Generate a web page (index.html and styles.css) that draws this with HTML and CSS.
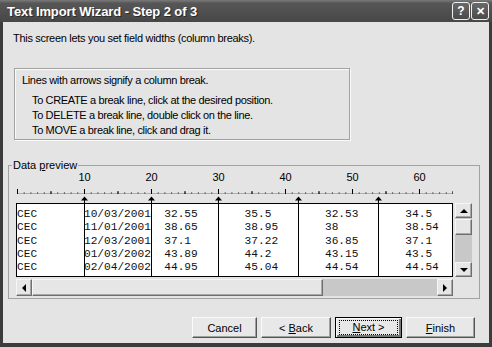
FILE: index.html
```html
<!DOCTYPE html>
<html lang="en">

<head>
    <meta charset="UTF-8">
    <title>Text Import Wizard - Step 2 of 3</title>
    <link rel="stylesheet" href="styles.css">
</head>

<body>
    <div class="window">
        <div class="titlebar">
            <span class="title">Text Import Wizard - Step 2 of 3</span>
            <div class="caption-buttons">
                <span class="cap-btn">?</span>
                <span class="cap-btn close">&#x2715;</span>
            </div>
        </div>

        <div class="client">
            <p class="intro">This screen lets you set field widths (column breaks).</p>

            <div class="hint">
                <p>Lines with arrows signify a column break.</p>
                <ul>
                    <li>To CREATE a break line, click at the desired position.</li>
                    <li>To DELETE a break line, double click on the line.</li>
                    <li>To MOVE a break line, click and drag it.</li>
                </ul>
            </div>

            <fieldset class="preview">
                <legend>Data <u>p</u>review</legend>

                <!-- ruler: one char = 6.7px, char 0 at x 1 -->
                <svg class="ruler" width="440" height="33" viewBox="0 0 440 33">
                    <line x1="1" y1="23.5" x2="437" y2="23.5" stroke="#b0b0b0" stroke-width="1" />
                    <line x1="1" y1="23" x2="437" y2="23" stroke="#000" stroke-width="1" stroke-dasharray="1 5.7" />
                    <line x1="1" y1="22.5" x2="437" y2="22.5" stroke="#000" stroke-width="3" stroke-dasharray="1 32.5" />
                    <line x1="1" y1="21.5" x2="437" y2="21.5" stroke="#000" stroke-width="5" stroke-dasharray="1 66" />
                    <g class="ruler-nums" text-anchor="middle">
                        <text x="68.5" y="11">10</text>
                        <text x="135.5" y="11">20</text>
                        <text x="202.5" y="11">30</text>
                        <text x="269.5" y="11">40</text>
                        <text x="336.5" y="11">50</text>
                        <text x="403.5" y="11">60</text>
                    </g>
                    <g class="arrows" fill="#000">
                        <path d="M65 30.5 L68.5 26.5 L72 30.5 Z M68 30h1v3h-1z" />
                        <path d="M132 30.5 L135.5 26.5 L139 30.5 Z M135 30h1v3h-1z" />
                        <path d="M199 30.5 L202.5 26.5 L206 30.5 Z M202 30h1v3h-1z" />
                        <path d="M279 30.5 L282.5 26.5 L286 30.5 Z M282 30h1v3h-1z" />
                        <path d="M359 30.5 L362.5 26.5 L366 30.5 Z M362 30h1v3h-1z" />
                    </g>
                </svg>

                <div class="data-row">
                    <div class="data">
<pre>CEC       10/03/2001  32.55       35.5        32.53       34.5
CEC       11/01/2001  38.65       38.95       38          38.54
CEC       12/03/2001  37.1        37.22       36.85       37.1
CEC       01/03/2002  43.89       44.2        43.15       43.5
CEC       02/04/2002  44.95       45.04       44.54       44.54</pre>
                        <i class="brk brk-10"></i>
                        <i class="brk brk-20"></i>
                        <i class="brk brk-30"></i>
                        <i class="brk brk-42"></i>
                        <i class="brk brk-54"></i>
                    </div>
                    <div class="vscroll">
                        <span class="sb-btn"><b class="tri up"></b></span>
                        <span class="sb-thumb v"></span>
                        <span class="sb-track"></span>
                        <span class="sb-btn"><b class="tri down"></b></span>
                    </div>
                </div>

                <div class="hscroll">
                    <span class="sb-btn"><b class="tri left"></b></span>
                    <span class="sb-thumb h"></span>
                    <span class="sb-track"></span>
                    <span class="sb-btn"><b class="tri right"></b></span>
                </div>
            </fieldset>

            <div class="buttons">
                <button class="btn cancel">Cancel</button>
                <button class="btn back">&lt; <u>B</u>ack</button>
                <button class="btn next default"><span class="focus"><u>N</u>ext &gt;</span></button>
                <button class="btn finish"><u>F</u>inish</button>
            </div>
        </div>
    </div>
</body>

</html>
```

FILE: styles.css
```css
* {
    box-sizing: border-box;
    margin: 0;
    padding: 0;
}

body {
    background: #3a3a3a;
    font-family: 'Liberation Sans', Arial, sans-serif;
    font-size: 11px;
    color: #000;
}

.window {
    width: 492px;
    height: 347px;
    display: flex;
    flex-direction: column;
}

.titlebar {
    height: 22px;
    display: flex;
    align-items: center;
    justify-content: space-between;
    padding: 0 3px 0 7px;
    background: linear-gradient(#7a7a7a, #565656 15%, #4e4e4e 60%, #474747);
}

.title {
    color: #fff;
    font-weight: bold;
    font-size: 13px;
    letter-spacing: -0.1px;
    text-shadow: 1px 1px 0 #2a2a2a;
}

.caption-buttons {
    display: flex;
    gap: 1px;
}

.cap-btn {
    width: 18px;
    height: 18px;
    border: 1px solid #f0f0f0;
    border-radius: 3px;
    background: linear-gradient(#6a6a6a, #4a4a4a);
    color: #fff;
    font-weight: bold;
    font-size: 12px;
    display: flex;
    align-items: center;
    justify-content: center;
}

.cap-btn.close {
    font-size: 11px;
}

.client {
    flex: 1;
    background: #e4e4e4;
    border: 3px solid #3c3c3c;
    border-top: 0;
    border-bottom-width: 4px;
}

.intro {
    margin: 10px 0 0 10px;
    line-height: 13px;
    letter-spacing: -0.3px;
}

.hint {
    margin: 23px 0 0 11px;
    width: 336px;
    height: 72px;
    border: 1px solid #a2a2a2;
    box-shadow: inset 1px 1px 0 #fafafa, 1px 1px 0 #fafafa;
    padding: 5px 0 0 7px;
    line-height: 13px;
    letter-spacing: -0.35px;
}

.hint ul {
    list-style: none;
    margin-top: 6px;
    padding-left: 10px;
}

.hint li {
    line-height: 15px;
}

.preview {
    margin: 19px 0 0 5px;
    width: 470px;
    height: 140px;
    border: 1px solid #a2a2a2;
    padding: 0 7px 0 7px;
}

.preview legend {
    margin-left: -4px;
    padding: 0 1px;
    line-height: 13px;
}

.ruler {
    display: block;
    margin-top: -2px;
}

.ruler-nums text {
    font-family: 'Liberation Sans', Arial, sans-serif;
    font-size: 11px;
    fill: #000;
}

.data-row {
    display: flex;
    gap: 2px;
}

.data {
    position: relative;
    width: 437px;
    height: 74px;
    border: 1px solid #000;
    background: #fff;
    overflow: hidden;
}

.data pre {
    font-family: 'Liberation Mono', 'Courier New', monospace;
    font-size: 11.17px;
    line-height: 13.25px;
    padding-top: 4px;
    color: #111;
}

.brk {
    position: absolute;
    top: 0;
    bottom: 0;
    width: 1px;
    background: #000;
}

.brk-10 { left: 67px; }
.brk-20 { left: 134px; }
.brk-30 { left: 201px; }
.brk-42 { left: 281px; }
.brk-54 { left: 361px; }

.vscroll {
    width: 17px;
    height: 74px;
    display: flex;
    flex-direction: column;
    background: #c8c8c8;
}

.hscroll {
    margin-top: 2px;
    width: 437px;
    height: 17px;
    display: flex;
    background: #c8c8c8;
}

.sb-btn,
.sb-thumb {
    flex: none;
    width: 17px;
    height: 16px;
    background: #e6e6e6;
    border: 1px solid;
    border-color: #f6f6f6 #6e6e6e #6e6e6e #f6f6f6;
    box-shadow: inset -1px -1px 0 #a8a8a8;
    display: flex;
    align-items: center;
    justify-content: center;
}

.vscroll .sb-btn {
    height: 15px;
}

.hscroll .sb-btn {
    height: 17px;
    width: 16px;
}

.sb-thumb.v {
    height: 16px;
    margin-top: 1px;
}

.sb-thumb.h {
    width: 291px;
    height: 17px;
}

.sb-track {
    flex: 1;
}

.tri {
    width: 0;
    height: 0;
    border: 4px solid transparent;
}

.tri.up {
    border-bottom-color: #000;
    border-top-width: 0;
}

.tri.down {
    border-top-color: #000;
    border-bottom-width: 0;
}

.tri.left {
    border-right-color: #000;
    border-left-width: 0;
}

.tri.right {
    border-left-color: #000;
    border-right-width: 0;
}

.buttons {
    display: flex;
    gap: 4px;
    margin: 18px 0 0 189px;
}

.btn {
    height: 21px;
    font-family: 'Liberation Sans', Arial, sans-serif;
    font-size: 11px;
    color: #000;
    background: #e8e8e8;
    border: 1px solid;
    border-color: #fafafa #555 #555 #fafafa;
    box-shadow: inset -1px -1px 0 #a0a0a0;
}

.btn.cancel { width: 65px; }
.btn.back { width: 70px; }
.btn.next { width: 67px; }
.btn.finish { width: 69px; }

.btn.default {
    border: 1px solid #000;
    box-shadow: inset 1px 1px 0 #fafafa, inset -2px -2px 0 #777;
}

.focus {
    display: block;
    margin: 0 3px;
    border: 1px dotted #000;
    line-height: 13px;
}
```
